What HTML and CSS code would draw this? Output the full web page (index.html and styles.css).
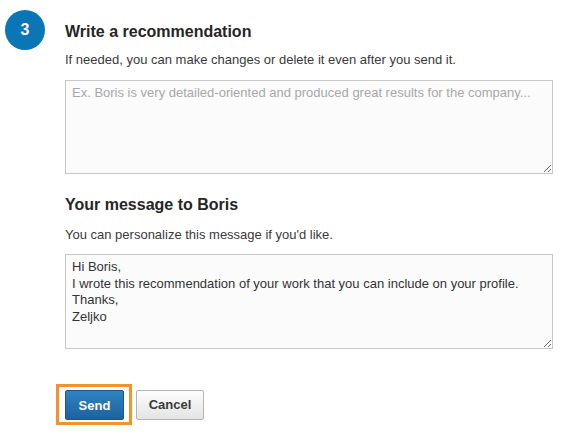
FILE: index.html
```html
<!DOCTYPE html>
<html lang="en">
<head>
<meta charset="utf-8">
<title>Write a recommendation</title>
<link rel="stylesheet" href="styles.css">
</head>
<body>
<div class="step">
  <div class="step-num">3</div>
  <div class="step-body">
    <h2 class="title">Write a recommendation</h2>
    <p class="hint first">If needed, you can make changes or delete it even after you send it.</p>
    <textarea class="field" placeholder="Ex. Boris is very detailed-oriented and produced great results for the company..."></textarea>
    <h2 class="title second">Your message to Boris</h2>
    <p class="hint">You can personalize this message if you'd like.</p>
    <textarea class="field msg">Hi Boris,
I wrote this recommendation of your work that you can include on your profile.
Thanks,
Zeljko</textarea>
    <div class="actions">
      <div class="highlight"><button class="btn primary">Send</button></div>
      <button class="btn secondary">Cancel</button>
    </div>
  </div>
</div>
</body>
</html>
```
FILE: styles.css
```css
html, body {
  margin: 0;
  padding: 0;
  background: #ffffff;
}
body {
  font-family: "Liberation Sans", Arial, sans-serif;
  color: #333333;
}
.step {
  display: flex;
  align-items: flex-start;
}
.step-num {
  width: 40px;
  height: 40px;
  margin: 10px 0 0 5px;
  border-radius: 50%;
  background: #0b76b5;
  color: #ffffff;
  font-weight: bold;
  font-size: 16px;
  line-height: 40px;
  text-align: center;
  flex: none;
}
.step-body {
  margin-left: 20px;
  padding-top: 22px;
  width: 488px;
  display: flex;
  flex-direction: column;
}
.title {
  margin: 0;
  font-size: 16px;
  line-height: 20px;
  font-weight: bold;
  color: #262626;
}
.title.second {
  margin-top: 21px;
}
.hint {
  margin: 12px 0 11px;
  font-size: 13px;
  line-height: 16px;
  color: #3a3a3a;
}
.hint.first {
  margin: 10px 0 12px;
}
.field {
  box-sizing: border-box;
  width: 488px;
  height: 94px;
  margin: 0;
  padding: 4px 6px;
  border: 1px solid #c8c8c8;
  border-radius: 0;
  background: #fbfbfb;
  font-family: "Liberation Sans", Arial, sans-serif;
  font-size: 13px;
  line-height: 16.67px;
  color: #333333;
  resize: vertical;
  outline: none;
}
.field::placeholder {
  color: #a8a8a8;
}
.msg {
  height: 95px;
}
.actions {
  display: flex;
  align-items: center;
  gap: 4px;
  margin: 35px 0 0 -9px;
}
.highlight {
  border: 3px solid #f7912a;
  padding: 3px 5px 2px 6px;
  display: flex;
}
.btn {
  box-sizing: border-box;
  height: 30px;
  margin: 0;
  border-radius: 2px;
  font-family: "Liberation Sans", Arial, sans-serif;
  font-size: 13px;
  font-weight: bold;
  cursor: pointer;
}
.primary {
  width: 59px;
  border: 1px solid #1a5887;
  background: linear-gradient(#2f83c2, #1d629e);
  color: #ffffff;
}
.secondary {
  width: 68px;
  border: 1px solid #b4b4b4;
  background: linear-gradient(#fdfdfd, #e4e4e4);
  color: #3a3a3a;
}
```
